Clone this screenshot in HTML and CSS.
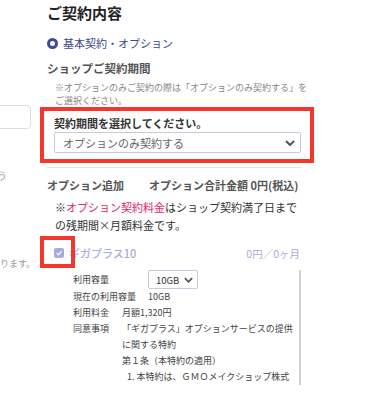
FILE: index.html
```html
<!DOCTYPE html>
<html lang="ja">
<head>
  <meta charset="UTF-8">
  <title>ご契約内容</title>
  <link rel="stylesheet" href="styles.css">
</head>
<body>

  <div class="page">
    <div class="side">
      <div class="side-input"></div>
      <div class="side-note1">お選びくださいますよう</div>
      <div class="side-note2">ります。</div>
    </div>

    <div class="main">
      <h1 class="title">ご契約内容</h1>

      <div class="plan">
        <span class="radio"></span>
        <span>基本契約・オプション</span>
      </div>

      <h2 class="sub">ショップご契約期間</h2>
      <p class="note">※オプションのみご契約の際は「オプションのみ契約する」を<br>ご選択ください。</p>

      <div class="period-box">
        <div class="period-label">契約期間を選択してください。</div>
        <div class="select">
          <span>オプションのみ契約する</span>
          <svg class="chev" width="10" height="6" viewBox="0 0 10 6"><path d="M1 1 L5 5 L9 1" fill="none" stroke="#555" stroke-width="2"/></svg>
        </div>
      </div>

      <hr class="line">

      <div class="opt-head">
        <span class="opt-add">オプション追加</span>
        <span>オプション合計金額 0円(税込)</span>
      </div>
      <p class="opt-note">※<span class="pink">オプション契約料金</span>はショップ契約満了日まで<br>の残期間×月額料金です。</p>

      <div class="opt-row">
        <span class="check">
          <svg width="10" height="10" viewBox="0 0 10 10"><path d="M2.6 5.1 L4.4 6.9 L7.6 3.4" fill="none" stroke="#fff" stroke-width="1.3"/></svg>
        </span>
        <span class="opt-name">ギガプラス10</span>
        <span class="opt-price">0円／0ヶ月</span>
        <span class="mark"></span>
      </div>

      <div class="detail">
        <div class="row-a">
          <span>利用容量</span>
          <div class="select small">
            <span>10GB</span>
            <svg class="chev" width="9" height="6" viewBox="0 0 10 6"><path d="M1 1 L5 5 L9 1" fill="none" stroke="#555" stroke-width="2"/></svg>
          </div>
          <span>現在の利用容量</span>
          <span>10GB</span>
        </div>
        <div class="row-b">
          <span>利用料金</span>
          <span>月額1,320円</span>
          <span>同意事項</span>
          <span>「ギガプラス」オプションサービスの提供<br>に関する特約<br>第１条（本特約の適用）<br><span class="indent">1. 本特約は、ＧＭＯメイクショップ株式</span></span>
        </div>
      </div>
    </div>
  </div>

</body>
</html>
```

FILE: styles.css
```css
html, body {
  margin: 0;
  overflow: hidden;
  background: #fff;
}
body {
  font-family: "Noto Sans CJK JP", "Noto Sans", sans-serif;
  color: #333;
}
.page {
  display: flex;
}
.side {
  width: 32px;
  flex-shrink: 0;
  overflow: hidden;
  color: #999;
}
.side-input {
  margin-top: 105px;
  margin-left: -20px;
  width: 49px;
  height: 22px;
  border: 1px solid #ddd;
  border-radius: 4px;
}
.side-note1 {
  margin-top: 41px;
  margin-left: -111px;
  width: 118px;
  text-align: right;
  font-size: 10px;
  line-height: 12px;
  white-space: nowrap;
}
.side-note2 {
  margin-top: 76px;
  font-size: 9px;
  line-height: 12px;
  white-space: nowrap;
}
.main {
  margin-left: 15px;
  width: 254px;
  padding-top: 2px;
}
.title {
  margin: 0;
  font-size: 15px;
  line-height: 22px;
  font-weight: 700;
  color: #222;
}
.plan {
  margin-top: 10px;
  display: flex;
  align-items: center;
  gap: 5px;
  height: 18px;
  font-size: 11px;
  color: #3b4a8e;
}
.radio {
  width: 5px;
  height: 5px;
  border: 3px solid #3b4a9a;
  border-radius: 50%;
  background: #fff;
}
.sub {
  margin: 7px 0 0;
  font-size: 11.5px;
  line-height: 18px;
  font-weight: 700;
  color: #555;
}
.note {
  margin: 5px 0 0 8px;
  font-size: 9px;
  line-height: 12.5px;
  color: #888;
  white-space: nowrap;
}
.period-box {
  margin: 0 -13px 0 -7px;
  border: 4px solid #f4372c;
  padding: 4px 9px 6px 10px;
}
.period-label {
  font-size: 11px;
  line-height: 16px;
  font-weight: 700;
  color: #333;
}
.select {
  margin-top: 1px;
  height: 19px;
  border: 1px solid #c8cbdd;
  border-radius: 2px;
  display: flex;
  align-items: center;
  justify-content: space-between;
  padding: 0 5px 0 8px;
  font-size: 11px;
  color: #666;
}
.line {
  margin: 4px 0 0;
  border: none;
  border-top: 1px solid #e2e2e2;
}
.opt-head {
  margin-top: 8px;
  display: flex;
  font-size: 11px;
  line-height: 18px;
  font-weight: 700;
  color: #555;
  white-space: nowrap;
}
.opt-add {
  width: 102px;
  flex-shrink: 0;
}
.opt-note {
  margin: 4px 0 0 8px;
  font-size: 11px;
  line-height: 18px;
  color: #333;
  white-space: nowrap;
}
.pink {
  color: #e3256b;
}
.opt-row {
  position: relative;
  margin-top: 10px;
  display: flex;
  align-items: center;
  height: 18px;
  padding-left: 7px;
  font-size: 11px;
  color: #a6acdd;
}
.check {
  width: 10px;
  height: 10px;
  border-radius: 2px;
  background: #a6aadd;
  display: flex;
  margin-right: 5px;
}
.opt-name {
  font-weight: 500;
}
.opt-price {
  margin-left: auto;
  margin-right: 1px;
  font-size: 10.5px;
}
.mark {
  position: absolute;
  left: -7px;
  top: -8px;
  width: 35px;
  height: 32px;
  box-sizing: border-box;
  border: 4px solid #f4372c;
}
.detail {
  position: relative;
  margin-top: 8px;
  margin-left: 26px;
  height: 115px;
  overflow: hidden;
  border-right: 2px solid #cfcfcf;
  font-size: 9px;
  line-height: 16px;
  color: #444;
}
.detail::after {
  content: "";
  position: absolute;
  right: 0;
  top: 0;
  width: 2px;
  height: 15px;
  background: #888;
  margin-right: -2px;
}
.row-a {
  display: grid;
  grid-template-columns: 75px 1fr;
  align-items: center;
}
.row-b {
  display: grid;
  grid-template-columns: 49px 1fr;
  white-space: nowrap;
}
.select.small {
  margin-top: 0;
  height: 17px;
  width: 37px;
  padding: 0 4px 0 7px;
  font-size: 9.5px;
  color: #333;
}
.indent {
  padding-left: 5px;
}
```
